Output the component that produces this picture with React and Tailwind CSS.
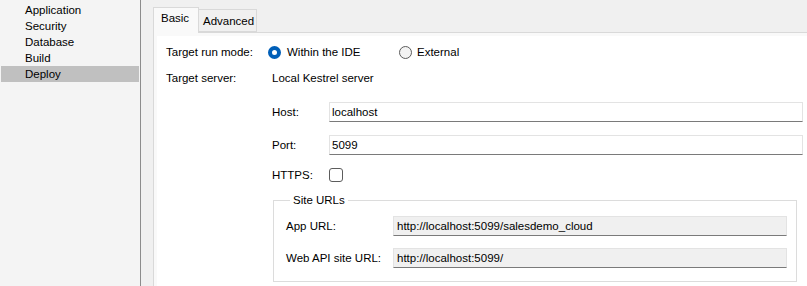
import React from 'react';

const navItems = ['Application', 'Security', 'Database', 'Build', 'Deploy'];

function Radio({ checked }) {
  return checked ? (
    <span className="box-border inline-block h-[13px] w-[13px] shrink-0 rounded-full border-[4px] border-[#005fb8] bg-white" />
  ) : (
    <span className="box-border inline-block h-[13px] w-[13px] shrink-0 rounded-full border border-[#5c5c5c] bg-[#f3f3f3]" />
  );
}

function TextBox({ value, readOnly }) {
  return (
    <div
      className={`flex h-[20px] flex-1 items-center border border-[#e3e3e3] border-b-[#7a7a7a] ${
        readOnly ? 'bg-[#f0f0f0] pl-[3px]' : 'bg-white pl-[2px]'
      }`}
    >
      {value}
    </div>
  );
}

export default function App() {
  return (
    <div
      className="flex h-[286px] w-[807px] overflow-hidden bg-[#f0f0f0] text-[11.5px] leading-[14px] text-black"
      style={{ fontFamily: '"Liberation Sans", Arial, sans-serif' }}
    >
      {/* Arborescence des pages */}
      <div className="w-[141px] shrink-0 border-r border-[#8c8c8c] bg-[#f4f4f4] px-px pt-[2px]">
        {navItems.map((item) => (
          <div
            key={item}
            className={`flex h-4 items-center pl-[24px] ${item === 'Deploy' ? 'bg-[#c0c0c0]' : ''}`}
          >
            {item}
          </div>
        ))}
      </div>

      {/* Onglets */}
      <div className="flex flex-1 flex-col pl-[12px] pt-[7px]">
        <div className="flex h-[25px] items-end">
          <div className="relative z-10 mb-[-1px] flex h-[26px] w-[46px] items-start border border-b-0 border-[#d9d9d9] bg-[#f9f9f9] pl-[7px] pt-[3px]">
            Basic
          </div>
          <div className="flex h-[23px] w-[58px] items-center border-y border-r border-[#d9d9d9] bg-[#f0f0f0] pl-[4px] pt-[1px]">
            Advanced
          </div>
        </div>

        <div className="flex-1 border-l border-t border-[#d9d9d9] bg-[#f9f9f9] pl-[3px] pt-[3px]">
          <div className="h-full bg-white pl-[9px] pr-[4px] pt-[6px]">
            <div className="flex h-[20px] items-center">
              <div className="w-[102px]">Target run mode:</div>
              <div className="flex w-[131px] items-center gap-[6px]">
                <Radio checked />
                <span>Within the IDE</span>
              </div>
              <div className="flex items-center gap-[5px]">
                <Radio />
                <span>External</span>
              </div>
            </div>

            <div className="mt-[6px] flex h-[20px] items-center">
              <div className="w-[106px]">Target server:</div>
              <div>Local Kestrel server</div>
            </div>

            <div className="ml-[106px] mt-[14px] flex h-[20px] items-center">
              <div className="w-[57px]">Host:</div>
              <TextBox value="localhost" />
            </div>

            <div className="ml-[106px] mt-[13px] flex h-[20px] items-center">
              <div className="w-[57px]">Port:</div>
              <TextBox value="5099" />
            </div>

            <div className="ml-[106px] mt-[10px] flex h-[20px] items-center">
              <div className="w-[57px]">HTTPS:</div>
              <span className="box-border inline-block h-[14px] w-[14px] rounded-[3px] border border-[#5c5c5c] bg-white" />
            </div>

            <fieldset className="ml-[107px] mr-[6px] mt-[8px] border border-[#dcdcdc] pb-[13px] pl-[12px] pr-[9px]">
              <legend className="ml-[4px] px-[3px]">Site URLs</legend>
              <div className="mt-[9px] flex h-[20px] items-center">
                <div className="w-[107px]">App URL:</div>
                <TextBox value="http://localhost:5099/salesdemo_cloud" readOnly />
              </div>
              <div className="mt-[12px] flex h-[20px] items-center">
                <div className="w-[107px]">Web API site URL:</div>
                <TextBox value="http://localhost:5099/" readOnly />
              </div>
            </fieldset>
          </div>
        </div>
      </div>
    </div>
  );
}
